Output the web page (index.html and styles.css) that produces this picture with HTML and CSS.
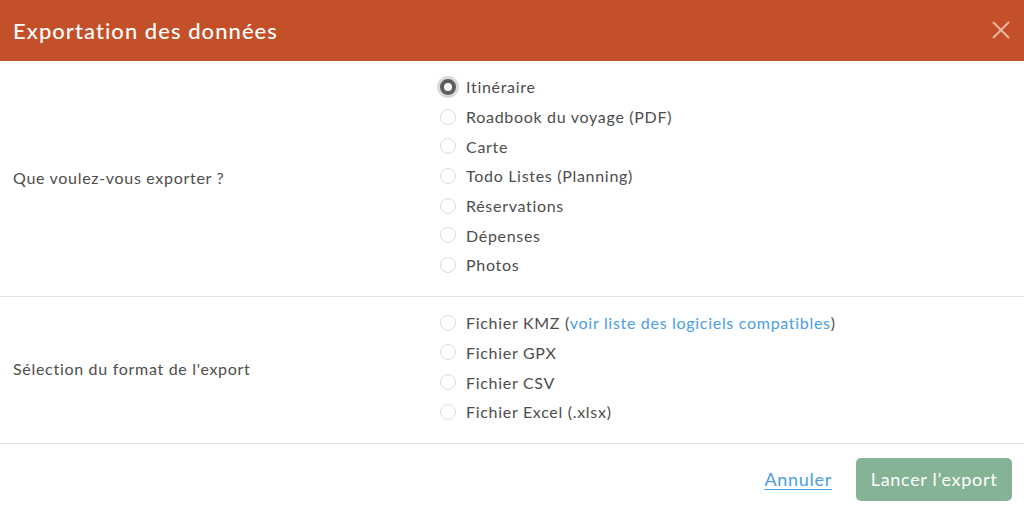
FILE: index.html
```html
<!DOCTYPE html>
<html lang="fr">
<head>
<meta charset="utf-8">
<link rel="stylesheet" href="styles.css">
</head>
<body>
<div class="modal">
  <div class="header">
    <h1 class="title">Exportation des données</h1>
    <button class="close" aria-label="Fermer">
      <svg width="20" height="20" viewBox="0 0 20 20"><path d="M2 2L18 18M18 2L2 18" stroke="currentColor" stroke-width="2" fill="none"/></svg>
    </button>
  </div>
  <div class="section">
    <div class="label">Que voulez-vous exporter ?</div>
    <div class="options">
      <label class="opt"><span class="radio checked"></span>Itinéraire</label>
      <label class="opt"><span class="radio"></span>Roadbook du voyage (PDF)</label>
      <label class="opt"><span class="radio"></span>Carte</label>
      <label class="opt"><span class="radio"></span>Todo Listes (Planning)</label>
      <label class="opt"><span class="radio"></span>Réservations</label>
      <label class="opt"><span class="radio"></span>Dépenses</label>
      <label class="opt"><span class="radio"></span>Photos</label>
    </div>
  </div>
  <div class="section">
    <div class="label">Sélection du format de l'export</div>
    <div class="options">
      <label class="opt"><span class="radio"></span>Fichier KMZ (<a class="link" href="#">voir liste des logiciels compatibles</a>)</label>
      <label class="opt"><span class="radio"></span>Fichier GPX</label>
      <label class="opt"><span class="radio"></span>Fichier CSV</label>
      <label class="opt"><span class="radio"></span>Fichier Excel (.xlsx)</label>
    </div>
  </div>
  <div class="footer">
    <a class="cancel" href="#">Annuler</a>
    <button class="submit">Lancer l’export</button>
  </div>
</div>
</body>
</html>
```
FILE: styles.css
```css
* { box-sizing: border-box; }
html, body { margin: 0; padding: 0; background: #fff; }
body { font-family: Lato, "Open Sans", sans-serif; color: #4d4d4d; width: 1024px; height: 511px; overflow: hidden; letter-spacing: 0.7px; }
.modal { width: 1024px; }
.header {
  height: 61px;
  background: #c4502a;
  display: flex;
  align-items: center;
  justify-content: space-between;
  padding: 0 12px 0 13px;
}
.title { margin: 0; font-size: 22px; font-weight: 500; color: #fff; letter-spacing: 1.05px; }
.close { background: none; border: 0; padding: 0; color: #eeb3a2; display: flex; width: 20px; height: 20px; margin-right: 1px; margin-top: -2px; }
.section {
  display: grid;
  grid-template-columns: 440px 1fr;
  border-bottom: 1px solid #e3e3e3;
  padding: 11px 0 16px;
}
.label { display: flex; align-items: center; padding-left: 13px; font-size: 16px; color: #4d4d4d; padding-top: 3px; }
.options { display: flex; flex-direction: column; }
.opt { display: flex; align-items: center; height: 29.7px; font-size: 16px; color: #4d4d4d; }
.radio {
  width: 16px; height: 16px; border-radius: 50%;
  border: 1px solid #dcdcdc;
  margin-right: 10px;
  flex: none;
  background: #fff;
}
.radio.checked {
  border: 4px solid #5f5b5a;
  box-shadow: 0 0 0 3px #d9d9d9;
}
.link { color: #4a9ee4; text-decoration: none; }
.footer {
  display: flex;
  justify-content: flex-end;
  align-items: center;
  padding: 14px 12px 0 0;
  gap: 24px;
}
.cancel { color: #4a9ee4; font-size: 18px; text-decoration: underline; text-underline-offset: 3px; letter-spacing: 0.7px; }
.submit {
  height: 43px;
  width: 156px;
  background: #84b395;
  color: #fff;
  border: 0;
  border-radius: 5px;
  font-family: inherit;
  font-size: 18px;
  letter-spacing: 0.7px;
}
```
